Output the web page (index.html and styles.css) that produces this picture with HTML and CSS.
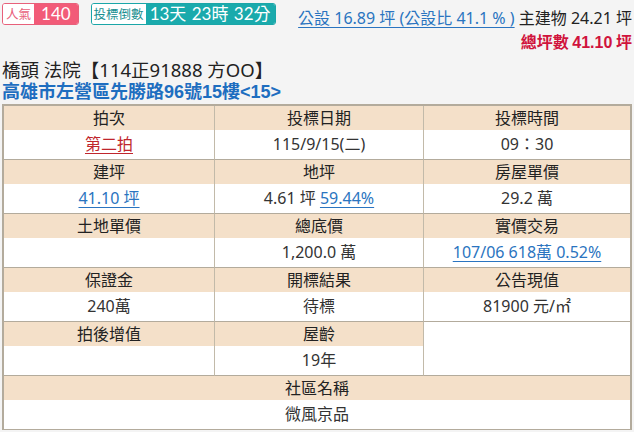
FILE: index.html
```html
<!DOCTYPE html>
<html lang="zh-Hant">
<head>
<meta charset="utf-8">
<link rel="stylesheet" href="styles.css">
</head>
<body>
<div class="top">
  <div class="badges">
    <span class="badge pink"><span class="lbl">人氣</span><span class="val">140</span></span>
    <span class="badge teal"><span class="lbl">投標倒數</span><span class="val">13天 23時 32分</span></span>
  </div>
  <div class="summary">
    <div class="line1"><a class="link" href="#">公設 16.89 坪 (公設比 41.1 % )</a> 主建物 24.21 坪</div>
    <div class="line2">總坪數 <b>41.10</b> 坪</div>
  </div>
</div>
<div class="title">橋頭 法院【114正91888 方OO】</div>
<div class="addr">高雄市左營區先勝路96號15樓&lt;15&gt;</div>
<div class="grid">
  <div class="cell"><div class="th">拍次</div><div class="td"><a class="red" href="#">第二拍</a></div></div>
  <div class="cell"><div class="th">投標日期</div><div class="td">115/9/15(二)</div></div>
  <div class="cell"><div class="th">投標時間</div><div class="td">09：30</div></div>

  <div class="cell"><div class="th">建坪</div><div class="td"><a class="link" href="#">41.10 坪</a></div></div>
  <div class="cell"><div class="th">地坪</div><div class="td">4.61 坪 <a class="link" href="#">59.44%</a></div></div>
  <div class="cell"><div class="th">房屋單價</div><div class="td">29.2 萬</div></div>

  <div class="cell"><div class="th">土地單價</div><div class="td"></div></div>
  <div class="cell"><div class="th">總底價</div><div class="td">1,200.0 萬</div></div>
  <div class="cell"><div class="th">實價交易</div><div class="td"><a class="link" href="#">107/06 618萬 0.52%</a></div></div>

  <div class="cell"><div class="th">保證金</div><div class="td">240萬</div></div>
  <div class="cell"><div class="th">開標結果</div><div class="td">待標</div></div>
  <div class="cell"><div class="th">公告現值</div><div class="td">81900 元/㎡</div></div>

  <div class="cell"><div class="th">拍後增值</div><div class="td"></div></div>
  <div class="cell"><div class="th">屋齡</div><div class="td">19年</div></div>
  <div class="cell empty"></div>

  <div class="cell full"><div class="th">社區名稱</div><div class="td">微風京品</div></div>
</div>
</body>
</html>
```
FILE: styles.css
```css
html, body { margin: 0; padding: 0; }
body {
  background: #f4f4f4;
  padding: 2px 2px 0 2px;
  font-family: "Noto Sans", "Noto Sans CJK TC", sans-serif;
  color: #333;
  font-size: 15px;
}
a { text-decoration: underline; }
.top {
  display: flex;
  justify-content: space-between;
  align-items: flex-start;
}
.badges {
  display: flex;
  gap: 12px;
  padding-top: 1px;
}
.badge {
  display: inline-flex;
  border: 1px solid;
  border-radius: 3px;
  overflow: hidden;
  height: 20px;
  line-height: 20px;
}
.badge .lbl {
  background: #fff;
  font-size: 12.5px;
  padding: 0 2px;
  font-family: "Noto Sans CJK TC", sans-serif;
}
.badge .val {
  color: #fff;
  font-size: 17px;
  font-family: "Lato", "Noto Sans CJK TC", sans-serif;
}
.pink { border-color: #e8607a; }
.pink .lbl { color: #e8607a; padding: 0 3px; }
.pink .val { background: #f25b78; padding: 0 7px 0 7px; }
.teal { border-color: #1aa6a8; }
.teal .lbl { color: #1a8f91; }
.teal .val { background: #1aaaac; padding: 0 4px 0 4px; word-spacing: 1px; }
.summary {
  text-align: right;
  padding-top: 5px;
  line-height: 23px;
  font-size: 16px;
}
.link { color: #2a74c0; text-decoration-color: #2a74c0; text-underline-offset: 3px; }
.line1 { color: #222; }
.line2 {
  color: #d0133c;
  font-weight: bold;
  font-family: "Noto Sans CJK TC", "Noto Sans", sans-serif;
}
.line2 b { font-family: "Liberation Sans", sans-serif; }
.title {
  margin-top: 5px;
  font-size: 18.5px;
  line-height: 22px;
  color: #222;
}
.addr {
  font-size: 18px;
  line-height: 22px;
  font-weight: bold;
  color: #1e6ec0;
  font-family: "Liberation Sans", "Noto Sans CJK TC", sans-serif;
}
.grid {
  margin-top: 1px;
  display: grid;
  grid-template-columns: 211px 209px 1fr;
  border: 2px solid #b3ab9c;
  border-bottom: 1px solid #b3ab9c;
  font-size: 16px;
  text-align: center;
}
.cell {
  border-right: 1px solid #c2baa9;
  border-bottom: 1px solid #b3ab9c;
  background: #fff;
}
.cell:nth-child(3n) { border-right: none; }
.cell.full { grid-column: 1 / -1; border-right: none; border-bottom: none; }
.th {
  background: #f4e0c9;
  height: 24px;
  line-height: 24px;
  color: #222;
}
.td {
  height: 29px;
  line-height: 29px;
  color: #333;
}
.red { color: #c0262d; text-decoration-color: #c0262d; text-underline-offset: 3px; }
```
